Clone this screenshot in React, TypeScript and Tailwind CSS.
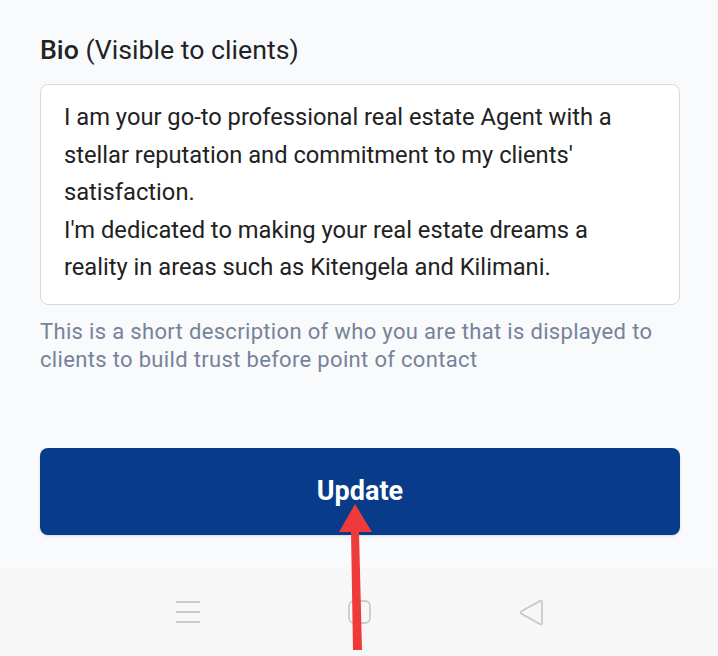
const BIO_TEXT =
  "I am your go-to professional real estate Agent with a stellar reputation and commitment to my clients' satisfaction.\nI'm dedicated to making your real estate dreams a reality in areas such as Kitengela and Kilimani.";

function NavBar() {
  return (
    <div className="flex h-[89px] items-center gap-[148px] bg-[#f7f7f7] pl-[176px] pt-[1px]">
      <svg width="24" height="24" viewBox="0 0 24 24" className="text-[#cbcbcb]">
        <path d="M0 2h24M0 12h24M0 22h24" stroke="currentColor" strokeWidth="1.8" />
      </svg>
      <svg width="23" height="24" viewBox="0 0 23 24" className="text-[#cbcbcb]">
        <rect x="1" y="1" width="21" height="22" rx="5" fill="none" stroke="currentColor" strokeWidth="1.8" />
      </svg>
      <svg width="25" height="27" viewBox="0 0 25 27" className="text-[#cbcbcb]">
        <path
          d="M23 3v21c0 1.2-0.9 1.7-1.8 1.1L2.2 14.6c-0.9-0.6-0.9-1.6 0-2.2L21.2 1.9C22.1 1.3 23 1.8 23 3z"
          fill="none"
          stroke="currentColor"
          strokeWidth="1.8"
          strokeLinejoin="round"
        />
      </svg>
    </div>
  );
}

export default function App() {
  return (
    <div
      className="relative flex h-[656px] w-[718px] flex-col overflow-hidden bg-[#f8fafc]"
      style={{ fontFamily: "Roboto, 'Noto Sans', sans-serif" }}
    >
      <div className="flex-1 pl-10 pr-[38px] pt-[33px]">
        <label className="block text-[26.7px] leading-[34px] text-[#1f2328]">
          <span className="font-medium">Bio</span> (Visible to clients)
        </label>

        <div className="mt-[17px] whitespace-pre-line rounded-lg border border-[#d5d9de] bg-white pl-[23px] pr-[40px] pt-[14px] pb-[17px] text-[23.7px] leading-[37.5px] text-[#222222]">
          {BIO_TEXT}
        </div>

        <p className="mt-[13px] text-[22px] leading-[28px] tracking-[0.33px] text-[#76839a]">
          This is a short description of who you are that is displayed to clients to build trust before point of
          contact
        </p>

        <button className="mt-[74px] flex h-[87px] w-full items-center justify-center rounded-lg bg-[#083c8a] text-[27px] font-bold text-white shadow-sm">
          Update
        </button>
      </div>

      <NavBar />

      <svg className="pointer-events-none absolute left-[336px] top-[502px]" width="40" height="150" viewBox="0 0 40 150">
        <path d="M19 2 L36 30 L23 30 L26 148 L17 148 L15 30 L3 30 Z" fill="#ee3a3a" />
      </svg>
    </div>
  );
}
